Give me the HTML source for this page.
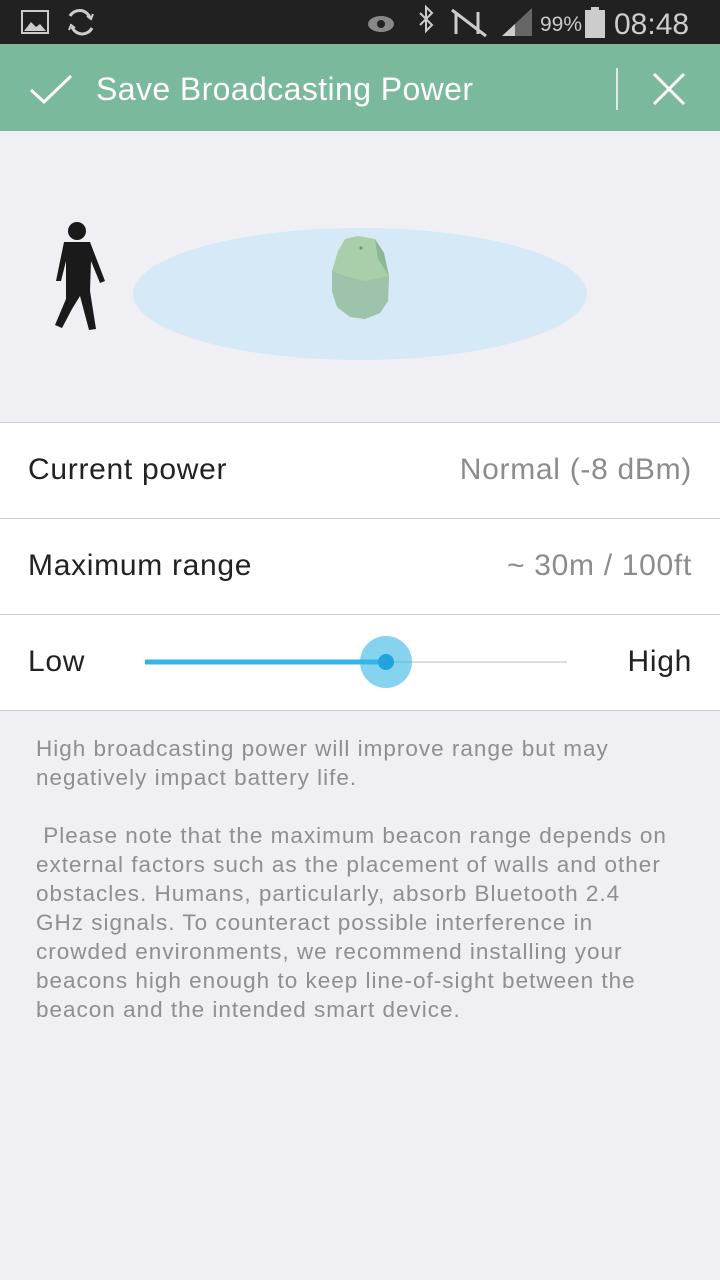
<!DOCTYPE html>
<html><head><meta charset="utf-8"><style>
*{margin:0;padding:0;box-sizing:border-box}
body{width:720px;height:1280px;background:#efeff4;font-family:"Liberation Sans",sans-serif;position:relative;overflow:hidden}
.sb{position:absolute;top:0;left:0;width:720px;height:44px;background:#212121;color:#ccc}
.hd{position:absolute;top:44px;left:0;width:720px;height:87px;background:#7bb99c;color:#fff}
.row{position:absolute;left:0;width:720px;height:96px;background:#fff;border-bottom:1px solid #cfcfd2;font-size:30px;color:#222;letter-spacing:0.7px}
.row .l{position:absolute;left:28px;top:30px}
.row .r{position:absolute;right:28px;top:30px;color:#8c8c8c}
.txt{position:absolute;left:36px;top:734px;width:700px;font-size:22.5px;line-height:29px;color:#8f8f8f;letter-spacing:1px;white-space:nowrap}
</style></head><body>
<div class="sb">
<svg width="720" height="44" style="position:absolute;left:0;top:0">
<rect x="22" y="11" width="26" height="22" fill="none" stroke="#ccc" stroke-width="2"/>
<path d="M24 31 L31 22 L36 27 L40 24 L46 31 Z" fill="#ccc"/>
<path d="M70 16 A11 11 0 0 1 90 18 M92 28 A11 11 0 0 1 72 27" fill="none" stroke="#ccc" stroke-width="3"/>
<path d="M87 16 L91 19 L93 14 M75 28 L71 25 L69 30" fill="none" stroke="#ccc" stroke-width="2"/>
<ellipse cx="381" cy="24" rx="13" ry="8" fill="#888"/><circle cx="381" cy="24" r="4" fill="#222"/>
<path d="M420 13 L432 25 L426 31 L426 7 L432 13 L420 25" fill="none" stroke="#ccc" stroke-width="2"/>
<path d="M452 10 L486 36 M456 12 L456 34 M478 12 L478 34" stroke="#ccc" stroke-width="3"/>
<path d="M502 36 L532 8 L532 36 Z" fill="#666"/><path d="M502 36 L515 24 L515 36Z" fill="#ccc"/>
<text x="540" y="31" font-size="21" fill="#ccc" font-family="Liberation Sans">99%</text>
<rect x="585" y="10" width="20" height="28" fill="#ccc"/><rect x="591" y="7" width="8" height="4" fill="#ccc"/>
<text x="614" y="34" font-size="30" fill="#ccc" font-family="Liberation Sans">08:48</text>
</svg>
</div>
<div class="hd">
<svg width="720" height="87" style="position:absolute;left:0;top:0">
<path d="M31 46 L44 58 L71 32" fill="none" stroke="#fff" stroke-width="3"/>
<line x1="617" y1="24" x2="617" y2="66" stroke="#dcece4" stroke-width="2"/>
<path d="M654 30 L684 60 M684 30 L654 60" stroke="#fff" stroke-width="3"/>
</svg>
<div style="position:absolute;left:96px;top:27px;font-size:32px;letter-spacing:0.4px">Save Broadcasting Power</div>
</div>
<svg width="720" height="290" style="position:absolute;left:0;top:131px">
<ellipse cx="360" cy="163" rx="227" ry="66" fill="#d6e9f6"/>
<circle cx="77" cy="100" r="9" fill="#1a1a1a"/>
<path d="M64 111 L90 111 L105 150 L100 152 L91 130 L90 160 L96 198 L89 199 L80 165 L72 178 L62 197 L55 194 L66 168 L66 130 L61 150 L56 150 Z" fill="#1a1a1a"/>
<path d="M345 108 L358 105 L375 108 L384 122 L389 145 L388 170 L380 182 L365 188 L350 186 L337 176 L332 160 L332 140 L338 120 Z" fill="#a9ceaa"/>
<path d="M332 140 L345 145 L365 150 L389 145 L388 170 L380 182 L365 188 L350 186 L337 176 L332 160 Z" fill="#9dc4ab"/>
<path d="M375 108 L384 122 L389 145 L378 128 Z" fill="#8db895"/>
<circle cx="361" cy="117" r="1.5" fill="#6f8f75"/>
</svg>
<div style="position:absolute;top:422px;left:0;width:720px;height:1px;background:#cfcfd2"></div>
<div class="row" style="top:423px"><span class="l">Current power</span><span class="r">Normal (-8 dBm)</span></div>
<div class="row" style="top:519px"><span class="l">Maximum range</span><span class="r">~ 30m / 100ft</span></div>
<div class="row" style="top:615px"><span class="l">Low</span><span class="r" style="color:#222">High</span>
<svg width="720" height="96" style="position:absolute;left:0;top:0">
<line x1="145" y1="47" x2="567" y2="47" stroke="#ddd" stroke-width="2"/>
<line x1="145" y1="47" x2="386" y2="47" stroke="#33b5e5" stroke-width="5"/>
<circle cx="386" cy="47" r="26" fill="#33b5e5" opacity="0.6"/>
<circle cx="386" cy="47" r="8" fill="#1ea6dc"/>
</svg></div>
<div class="txt">High broadcasting power will improve range but may<br>negatively impact battery life.<br><br>&nbsp;Please note that the maximum beacon range depends on<br>external factors such as the placement of walls and other<br>obstacles. Humans, particularly, absorb Bluetooth 2.4<br>GHz signals. To counteract possible interference in<br>crowded environments, we recommend installing your<br>beacons high enough to keep line-of-sight between the<br>beacon and the intended smart device.</div>
</body></html>
